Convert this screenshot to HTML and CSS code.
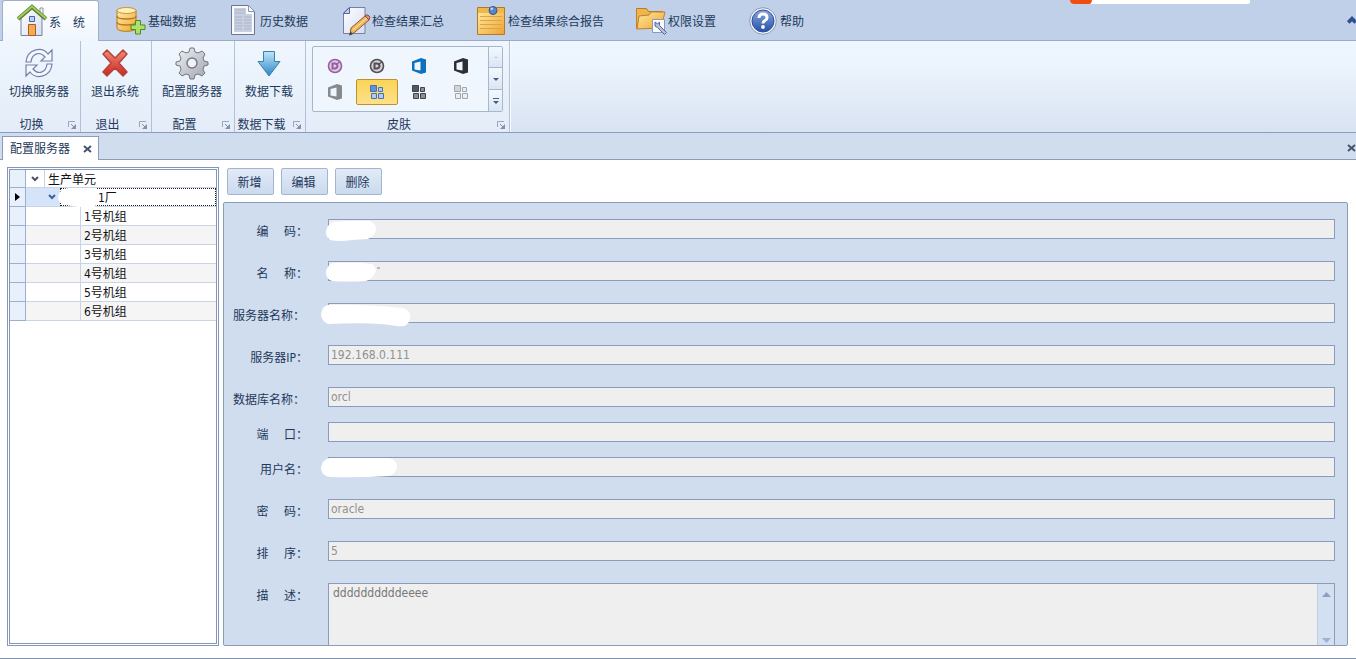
FILE: index.html
```html
<!DOCTYPE html>
<html lang="zh-CN">
<head>
<meta charset="utf-8">
<title>配置服务器</title>
<link rel="stylesheet" href="styles.css">
</head>
<body>
<svg class="defs" aria-hidden="true">
  <defs>
    <linearGradient id="gold" x1="0" x2="1" y1="0" y2="1"><stop offset="0" stop-color="#fff0a8"/><stop offset="1" stop-color="#f0a22e"/></linearGradient>
    <linearGradient id="paper" x1="0" x2="1" y1="0" y2="1"><stop offset="0" stop-color="#ffffff"/><stop offset="1" stop-color="#d5ddf2"/></linearGradient>
    <linearGradient id="red" x1="0" x2="0" y1="0" y2="1"><stop offset="0" stop-color="#f08a7a"/><stop offset="1" stop-color="#c9281c"/></linearGradient>
    <linearGradient id="blue" x1="0" x2="0" y1="0" y2="1"><stop offset="0" stop-color="#bfe6f8"/><stop offset="1" stop-color="#2f86c8"/></linearGradient>
    <linearGradient id="steel" x1="0" x2="1" y1="0" y2="1"><stop offset="0" stop-color="#f2f2f5"/><stop offset="1" stop-color="#9fa3ad"/></linearGradient>
    <linearGradient id="orb" x1="0" x2="0" y1="0" y2="1"><stop offset="0" stop-color="#88a8dc"/><stop offset="1" stop-color="#2650a8"/></linearGradient>
    <symbol id="launcher" viewBox="0 0 10 10"><path d="M1.500 7V1.500H8" fill="none" stroke="#9aa6bb"/><path d="M9 4v5H4z" fill="#8390a8"/><path d="M4 4l3 3" stroke="#8390a8"/></symbol>
    <symbol id="office" viewBox="0 0 16 16"><path d="M1 3.500 10 0l5 1.500v13L10 16l-9-3.500zM3.500 5v6.500l6 1v-9z" fill="currentColor" fill-rule="evenodd"/></symbol>
    <symbol id="badge" viewBox="0 0 16 16"><circle cx="8" cy="8" r="6.500" fill="#d9d0dc" stroke="currentColor" stroke-width="1.600"/><path d="M5.500 5.500H8Q10.500 6 10.500 8T8 10.500H5.500z" fill="none" stroke="currentColor" stroke-width="2"/><path d="m10 6 2.500-2" stroke="currentColor" stroke-width="1.500"/></symbol>
    <symbol id="chevron" viewBox="0 0 8 6"><path d="M1 1l3 3 3-3" fill="none" stroke="currentColor" stroke-width="2"/></symbol>
  </defs>
</svg>

<nav class="tabs">
  <button class="tab tab-active"><svg class="icon" viewBox="0 2 32 40"><path d="M5 17 16 7l10 10v17.500H5z" fill="url(#paper)" stroke="#7883a0"/><path d="M24 7h3v8l-3-3z" fill="#fff" stroke="#8a8ea0"/><path d="M2 18 16 6l14 12" fill="none" stroke="#58802c" stroke-width="4"/><path d="M2 17.500 16 5.500l14 12" fill="none" stroke="#a2cd5e" stroke-width="2"/><path d="M13.500 15.500h5v5h-5z" fill="#bcd3f8" stroke="#4766a8"/><path d="M12.500 23.500h7v11h-7z" fill="#f5aa58" stroke="#b05c18"/></svg>系　统</button>
  <button class="tab"><svg class="icon" viewBox="0 2 32 40"><path d="M2 10v18c0 4.500 19 4.500 19 0V10z" fill="url(#gold)" stroke="#b97b24"/><ellipse cx="11.500" cy="10.500" rx="9.500" ry="3" fill="#fff0b8" stroke="#c99237"/><path d="M2 16c0 4 19 4 19 0M2 22c0 4 19 4 19 0" fill="none" stroke="#b97b24" stroke-width="1.500"/><path d="M20.500 20.500h5V25H30v4.500h-4.500V34h-5v-4.500H16V25h4.500z" fill="#aee168" stroke="#4b8b22"/></svg>基础数据</button>
  <button class="tab"><svg class="icon" viewBox="0 2 32 40"><path d="M4.500 5.500h17l6 6v23h-23z" fill="#f8faff" stroke="#6d7590"/><path d="M7 8h12v6h6v18H7z" fill="#c8cfe0"/><path d="M21.500 5.500v6h6z" fill="#fff" stroke="#8a92ac"/><path d="M8 10h10M8 13h10M8 17h7m2 0h7M8 20h7m2 0h7M8 23h7m2 0h7M8 26h7m2 0h7M8 29h7m2 0h7" stroke="#aab3c8"/></svg>历史数据</button>
  <button class="tab"><svg class="icon" viewBox="0 2 32 40"><path d="M10 7.500h16v26H4.500V13z" fill="url(#paper)" stroke="#7681a5"/><path d="M10.500 7.500v6h-6z" fill="#c5d0ed" stroke="#5568a0"/><path d="m12 28 14-12 4 4-14 12-5 3z" fill="#f1b65d" stroke="#8a5b2a"/><path d="m26 16 1-1q2-1 4 2l-1 3z" fill="#d98a80" stroke="#934b42"/><path d="m14 30 14-12" stroke="#fff0b0"/><path d="m10 35.500 1.500-4 2.500 2.500z" fill="#3a414d"/></svg>检查结果汇总</button>
  <button class="tab"><svg class="icon" viewBox="0 2 32 40"><path d="M2.500 7.500h27v27h-27z" fill="url(#gold)" stroke="#b67826"/><path d="M3 8h26v5H3z" fill="#f0b84b"/><path d="M5 16.500h22M5 20.500h22M5 24.500h22M5 28.500h22" stroke="#dca447"/><circle cx="18" cy="10.500" r="4" fill="#5b87c9" stroke="#2e5592"/><circle cx="16.800" cy="8.800" r="1.300" fill="#c6ddf5"/></svg>检查结果综合报告</button>
  <button class="tab"><svg class="icon" viewBox="0 2 32 40"><path d="M1.500 8.500h10l2 3h14v6h-24v11h-2z" fill="#efb44c" stroke="#b77c26"/><path d="M1.500 28.500V9M4 16l10-1 2-3h14l-4 16-24 1z" fill="url(#gold)" stroke="#bd822a"/><path d="M17.500 19.500h12v13h-12z" fill="#f8faff" stroke="#8d98b8"/><path d="M20 22v4l2.500 1.500 7 7 2-2-7-7V22l-2 2z" fill="#b7c3dd" stroke="#53658f"/></svg>权限设置</button>
  <button class="tab"><svg class="icon" viewBox="0 2 32 40"><circle cx="16" cy="21" r="13.300" fill="#f2f5fb" stroke="#8a98b5"/><circle cx="16" cy="21" r="11" fill="url(#orb)" stroke="#2c509a"/><path d="M12 18q0-4 4-4t4 3.500q0 2-2 3t-2 3" fill="none" stroke="#fff" stroke-width="3"/><circle cx="16" cy="27" r="1.900" fill="#fff"/></svg>帮助</button>
  <span class="float-bar"><span class="float-dot"></span></span>
  <button class="collapse" aria-label="折叠功能区"><svg viewBox="0 0 8 6"><path d="M1 5l3-3 3 3" fill="none" stroke="#2f4f92" stroke-width="3"/></svg></button>
</nav>

<section class="ribbon">
  <div class="group">
    <button class="command"><svg class="icon" viewBox="0 0 32 32"><g fill="#f4f7ff" stroke="#7480a8" stroke-width="1.200"><path d="M3 15C4 2 19-1 25 7l4-4v11H18l4-4C17 4 9 6 8 15z"/><path d="M29 17C28 30 13 33 7 25l-4 4V18h11l-4 4c5 6 13 4 14-5z"/></g></svg>切换服务器</button>
    <div class="caption"><span>切换</span><svg class="launcher"><use href="#launcher"/></svg></div>
  </div>
  <div class="group">
    <button class="command"><svg class="icon" viewBox="0 0 32 32"><path d="m4 7 4-4 8 8 8-8 4 4-8 9 8 9-4 4-8-8-8 8-4-4 8-9z" fill="url(#red)" stroke="#b5413a" stroke-width="1.500" stroke-linejoin="round"/></svg>退出系统</button>
    <div class="caption"><span>退出</span><svg class="launcher"><use href="#launcher"/></svg></div>
  </div>
  <div class="group">
    <button class="command"><svg class="icon" viewBox="0 0 32 32"><path d="m13 5 1-4h4l1 4 3 1 4-2 3 3-2 4 1 3 4 1v3l-4 1-1 4 2 3-3 3-4-2-3 1-1 4h-4l-1-4-3-1-4 2-3-3 2-3-1-4-4-1v-3l4-1 1-3-2-4 3-3 4 2z" fill="url(#steel)" stroke="#737783" stroke-linejoin="round"/><circle cx="16" cy="16" r="5" fill="#edf3fb" stroke="#777b88" stroke-width="1.500"/></svg>配置服务器</button>
    <div class="caption"><span>配置</span><svg class="launcher"><use href="#launcher"/></svg></div>
  </div>
  <div class="group">
    <button class="command"><svg class="icon" viewBox="0 0 32 32"><path d="M10.500 4.500h11v10H27L16 29 5 14.500h5.500z" fill="url(#blue)" stroke="#3c7fae" stroke-linejoin="round"/></svg>数据下载</button>
    <div class="caption"><span>数据下载</span><svg class="launcher"><use href="#launcher"/></svg></div>
  </div>
  <div class="group group-skin">
    <div class="gallery">
      <div class="skins">
        <button class="skin plum" aria-label="皮肤 1"><svg><use href="#badge"/></svg></button>
        <button class="skin dim" aria-label="皮肤 2"><svg><use href="#badge"/></svg></button>
        <button class="skin azure" aria-label="皮肤 3"><svg><use href="#office"/></svg></button>
        <button class="skin ink" aria-label="皮肤 4"><svg><use href="#office"/></svg></button>
        <button class="skin gray" aria-label="皮肤 5"><svg><use href="#office"/></svg></button>
        <button class="skin skin-on" aria-label="皮肤 6"><svg viewBox="0 0 16 16"><g fill="#a9cdf8" stroke="#4c6fae"><path d="M1.500 1.500h6v6h-6z" fill="#5d92e0"/><path d="M9.500 3.500h4v4h-4zM2.500 9.500h5v5h-5zM9.500 9.500h5v5h-5z"/></g></svg></button>
        <button class="skin" aria-label="皮肤 7"><svg viewBox="0 0 16 16"><g fill="#8b8f95" stroke="#3f4246"><path d="M1.500 1.500h6v6h-6z" fill="#55585d"/><path d="M9.500 3.500h4v4h-4zM2.500 9.500h5v5h-5zM9.500 9.500h5v5h-5z"/></g></svg></button>
        <button class="skin" aria-label="皮肤 8"><svg viewBox="0 0 16 16"><g fill="#eceef0" stroke="#a2a6aa"><path d="M1.500 1.500h6v6h-6z" fill="#d2d5d8"/><path d="M9.500 3.500h4v4h-4zM2.500 9.500h5v5h-5zM9.500 9.500h5v5h-5z"/></g></svg></button>
      </div>
      <div class="gallery-nav">
        <button aria-label="上一行" disabled><svg viewBox="0 0 8 8"><path d="M2 5l2-2 2 2z" fill="#c5cfde"/></svg></button>
        <button aria-label="下一行"><svg viewBox="0 0 8 8"><path d="M1 3h6L4 6z" fill="#4b5d7d"/></svg></button>
        <button aria-label="展开"><svg viewBox="0 0 8 8"><path d="M1 1h6v1H1zM1 4h6L4 7z" fill="#4b5d7d"/></svg></button>
      </div>
    </div>
    <div class="caption"><span>皮肤</span><svg class="launcher"><use href="#launcher"/></svg></div>
  </div>
</section>

<div class="documents">
  <div class="document">配置服务器<button class="close" aria-label="关闭标签"><svg viewBox="0 0 9 8"><path d="M1 1l7 6M8 1 1 7" stroke="#44536f" stroke-width="2"/></svg></button></div>
  <button class="close" aria-label="关闭"><svg viewBox="0 0 9 8"><path d="M1 1l7 6M8 1 1 7" stroke="#44536f" stroke-width="2"/></svg></button>
</div>

<main class="workspace">
  <div class="tree" role="tree">
    <div class="node node-root" role="treeitem"><span class="mark"></span><span class="toggle"><svg><use href="#chevron"/></svg></span><span class="name">生产单元</span></div>
    <div class="node node-focus" role="treeitem"><span class="mark"><svg viewBox="0 0 5 8"><path d="M0 0l5 4-5 4z"/></svg></span><span class="toggle toggle-deep"><svg><use href="#chevron"/></svg></span><span class="name">1厂</span>
      <svg class="cover cover-node" viewBox="0 0 46 20"><path d="M10 0h29v13l-2 7H26L8 17Q0 15 0 9 1 1 10 0z" fill="#fff"/></svg></div>
    <div class="node leaf" role="treeitem"><span class="mark"></span><span class="indent"></span><span class="name">1号机组</span></div>
    <div class="node leaf" role="treeitem"><span class="mark"></span><span class="indent"></span><span class="name">2号机组</span></div>
    <div class="node leaf" role="treeitem"><span class="mark"></span><span class="indent"></span><span class="name">3号机组</span></div>
    <div class="node leaf" role="treeitem"><span class="mark"></span><span class="indent"></span><span class="name">4号机组</span></div>
    <div class="node leaf" role="treeitem"><span class="mark"></span><span class="indent"></span><span class="name">5号机组</span></div>
    <div class="node leaf" role="treeitem"><span class="mark"></span><span class="indent"></span><span class="name">6号机组</span></div>
  </div>
  <div class="detail">
    <div class="actions"><button class="action">新增</button><button class="action">编辑</button><button class="action">删除</button></div>
    <form class="panel">
      <div class="row"><label for="code">编　 码：</label><div class="field"><input id="code" disabled><svg class="cover" viewBox="0 0 92 26"><path d="M8 3Q24 1 44 2q6 3 6 8-1 7-8 10l-16 1q-12 2-22 0-6-5-3-12 2-5 7-6z" fill="#fff"/></svg></div></div>
      <div class="row"><label for="name">名　 称：</label><div class="field"><input id="name" disabled><svg class="cover" viewBox="0 0 92 26"><path d="M8 2Q30 1 46 3q5 4 3 9-3 6-9 8-20 1-34 0-7-3-6-10 2-7 8-8z" fill="#fff"/><path d="M51 7h3" stroke="#888"/></svg></div></div>
      <div class="row"><label class="label-long" for="server">服务器名称：</label><div class="field"><input id="server" disabled><svg class="cover" viewBox="0 0 92 26"><path d="M7 2q30-1 75 3 9 3 7 11-2 9-14 7-20-4-68-2Q0 18 0 11q1-8 7-9z" fill="#fff"/></svg></div></div>
      <div class="row"><label for="ip">服务器IP：</label><div class="field"><input id="ip" value="192.168.0.111" disabled></div></div>
      <div class="row row-tight"><label class="label-long" for="db">数据库名称：</label><div class="field"><input id="db" value="orcl" disabled></div></div>
      <div class="row row-tight"><label for="port">端　 口：</label><div class="field"><input id="port" disabled></div></div>
      <div class="row"><label for="user">用户名：</label><div class="field"><input id="user" disabled><svg class="cover" viewBox="0 0 92 26"><path d="M8 1h60q8 2 8 9-1 7-8 9-30 2-60 1-8-2-8-9 1-8 8-10z" fill="#fff"/></svg></div></div>
      <div class="row"><label for="password">密　 码：</label><div class="field"><input id="password" value="oracle" disabled></div></div>
      <div class="row"><label for="order">排　 序：</label><div class="field"><input id="order" value="5" disabled></div></div>
      <div class="row row-fill"><label for="note">描　 述：</label><div class="field memo"><textarea id="note" disabled>ddddddddddeeee</textarea><div class="scroll"><svg viewBox="0 0 9 5"><path d="M0 5l4.500-5L9 5z" fill="#8f9fc0"/></svg><svg viewBox="0 0 9 5"><path d="M0 0l4.500 5L9 0z" fill="#a0b0d0"/></svg></div></div></div>
    </form>
  </div>
</main>
</body>
</html>
```
FILE: styles.css
```css
* { box-sizing: border-box; }
body {
  margin: 0;
  height: 100vh;
  display: flex;
  flex-direction: column;
  overflow: hidden;
  background: #fff;
  border-bottom: 1px solid #7e95b8;
  color: #1e395b;
  font: 12px/16px "DejaVu Sans Condensed", "Noto Sans CJK SC", sans-serif;
}
button, input, textarea { font: inherit; color: inherit; margin: 0; }
button { padding: 0; border: 0; background: none; }
.defs { position: absolute; width: 0; height: 0; }
.icon { width: 32px; height: 32px; flex: none; overflow: visible; }

.tabs {
  position: relative;
  display: flex;
  flex: none;
  height: 41px;
  padding-left: 2px;
  background: #bfd0e8;
  border-bottom: 1px solid #9aabc6;
}
.tab { display: flex; align-items: center; gap: 1px; padding: 4px 15px 0 16px; white-space: nowrap; }
.tab .icon { height: 40px; }
.tab-active {
  height: 41px;
  padding: 3px 13px 0;
  background: linear-gradient(#fff, #f0f6fe);
  border: 1px solid #9fb0ca;
  border-bottom: 0;
  border-radius: 3px 3px 0 0;
}
.float-bar {
  position: absolute;
  top: 0;
  right: 106px;
  width: 180px;
  height: 4px;
  overflow: hidden;
  background: #fff;
  border-radius: 0 0 2px 4px;
}
.float-dot { display: block; width: 22px; height: 5px; background: #f04e10; border-radius: 0 0 18px 4px; }
.collapse { margin-left: auto; width: 9px; overflow: hidden; }
.collapse svg { display: block; width: 10px; height: 8px; }

.ribbon {
  display: flex;
  flex: none;
  height: 92px;
  background: linear-gradient(#eef6fe, #ebf3fc 30%, #d8e3f2);
  border-bottom: 1px solid #8b9cba;
}
.group {
  display: flex;
  flex-direction: column;
  justify-content: space-between;
  padding-top: 6px;
  background: linear-gradient(#eff6fe, #e3ecf8);
  border-right: 1px solid #b3c1d8;
  box-shadow: 1px 0 #f8fbff;
}
.command { display: flex; flex-direction: column; align-items: center; gap: 5px; padding: 0 12px 0 10px; white-space: nowrap; }
.group:first-child .command { padding: 0 11px 0 9px; }
.caption { display: flex; align-items: center; justify-content: space-between; padding-right: 3px; height: 15px; }
.caption span { flex: 1; padding-right: 4px; text-align: center; white-space: nowrap; }
.launcher { width: 10px; height: 10px; flex: none; }
.group-skin { padding-top: 5px; }
.gallery {
  display: flex;
  margin: 0 6px;
  border: 1px solid #a8b6cd;
  border-radius: 2px;
  background: #f0f6fd;
}
.skins { display: grid; grid-template-columns: repeat(4, 42px); grid-auto-rows: 26px; padding: 6px 6px 6px 1px; }
.skin { display: flex; align-items: center; justify-content: center; border-radius: 2px; color: #6b6e72; }
.skin svg { width: 16px; height: 16px; }
.skin-on { background: linear-gradient(#fbd457, #fde08a); border: 1px solid #bf9030; }
.plum { color: #9c5ba4; }
.dim { color: #505050; }
.azure { color: #0f70bd; }
.ink { color: #2d2f32; }
.gray { color: #86898d; }
.gallery-nav { display: grid; grid-template-rows: 20px 22px 22px; width: 14px; border-left: 1px solid #a8b6cd; }
.gallery-nav button { display: flex; align-items: center; justify-content: center; background: linear-gradient(#f3f8fe, #dae6f5); }
.gallery-nav button + button { border-top: 1px solid #a8b6cd; }
.gallery-nav svg { width: 8px; height: 8px; }

.documents {
  display: flex;
  flex: none;
  align-items: flex-end;
  justify-content: space-between;
  height: 27px;
  padding-left: 2px;
  background: #d0ddee;
  border-bottom: 1px solid #8b9cba;
}
.document {
  display: flex;
  align-items: center;
  gap: 13px;
  height: 24px;
  margin-bottom: -1px;
  padding: 1px 6px 0 7px;
  background: #fff;
  border: 1px solid #8b9cba;
  border-bottom: 0;
}
.close { display: flex; align-items: center; height: 22px; }
.close svg { width: 9px; height: 8px; }

.workspace { display: flex; flex: 1; min-height: 0; gap: 4px; padding: 7px 8px 12px 7px; }
.tree {
  flex: none;
  width: 212px;
  border: 3px double #8497b8;
  color: #111;
}
.node { position: relative; display: flex; height: 19px; border-bottom: 1px solid #c9d4e6; }
.node-root { height: 18px; }
.mark {
  display: flex;
  align-items: center;
  justify-content: center;
  width: 16px;
  margin-bottom: -1px;
  background: #e8f0fb;
  border-right: 1px solid #9bb0cf;
  border-bottom: 1px solid #9bb0cf;
}
.mark svg { width: 5px; height: 8px; }
.toggle { display: flex; align-items: center; justify-content: center; width: 19px; border-right: 1px solid #c9d4e6; color: #4a5568; }
.toggle svg { width: 8px; height: 6px; }
.toggle-deep { width: 34px; padding-left: 18px; border: 0; background: #d6e4fa; color: #3a62a0; }
.name { flex: 1; padding-left: 3px; line-height: 20px; white-space: nowrap; }
.node-focus .name { padding-left: 37px; line-height: 19px; border: 1px dotted #222; }
.indent { width: 55px; margin-bottom: -1px; border-right: 1px solid #c9d4e6; }
.leaf:nth-child(even) { background: #f5f5f6; }
.leaf .mark { background: #e8f0fb; }

.detail { display: flex; flex: 1; flex-direction: column; min-width: 0; }
.actions { display: flex; gap: 7px; padding: 1px 4px 7px; }
.action {
  width: 47px;
  height: 27px;
  padding: 2px 2px 0 0;
  background: linear-gradient(#e2ebf7, #cbdaee);
  border: 1px solid #a3b5d0;
  border-radius: 2px;
}
.panel {
  display: flex;
  flex: 1;
  flex-direction: column;
  min-height: 0;
  padding: 16px 12px 0 0;
  overflow: hidden;
  background: #d0ddee;
  border: 1px solid #8b9cba;
  border-radius: 2px;
}
.row { display: flex; flex: none; height: 42px; }
.row-tight { height: 35px; }
.row-fill { flex: 1; height: auto; min-height: 0; }
.row label { flex: none; width: 104px; padding: 5px 20px 0 0; text-align: right; white-space: pre; }
.row .label-long { padding-right: 23px; }
.field { position: relative; flex: 1; min-width: 0; }
.field input {
  display: block;
  width: 100%;
  height: 20px;
  padding: 0 2px;
  color: #909090;
  background: #efefef;
  border: 1px solid #8b9cba;
  border-radius: 0;
}
.memo { display: flex; background: #efefef; border: 1px solid #8b9cba; border-bottom: 0; }
.memo textarea {
  flex: 1;
  padding: 1px 4px;
  resize: none;
  overflow: hidden;
  color: #777;
  background: none;
  border: 0;
}
.scroll { display: flex; flex-direction: column; align-items: center; justify-content: space-between; width: 17px; padding: 8px 0 2px; background: #d3e0f1; border-left: 1px solid #c0cde0; }
.scroll svg { width: 9px; height: 5px; }
.cover { position: absolute; top: 0; left: -7px; width: 92px; height: 26px; }
.row:nth-child(-n+2) .cover { left: -2px; }
.cover-node { left: 48px; top: 0; width: 46px; height: 20px; }
```
